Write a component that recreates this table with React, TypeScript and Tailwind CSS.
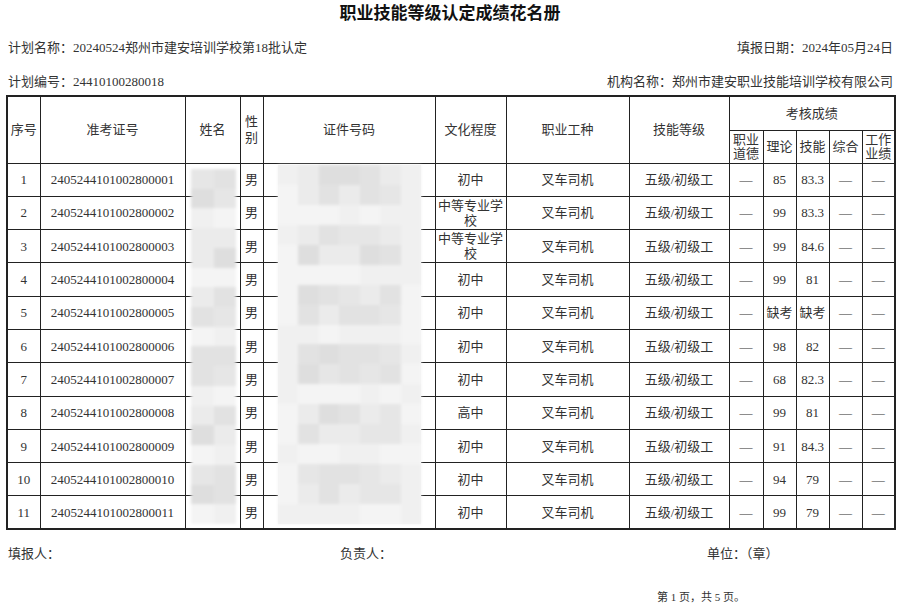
const rows: [number, string, string, string][] = [
  [1, '初中', '85', '83.3'],
  [2, '中等专业学校', '99', '83.3'],
  [3, '中等专业学校', '99', '84.6'],
  [4, '初中', '99', '81'],
  [5, '初中', '缺考', '缺考'],
  [6, '初中', '98', '82'],
  [7, '初中', '68', '82.3'],
  [8, '高中', '99', '81'],
  [9, '初中', '91', '84.3'],
  [10, '初中', '94', '79'],
  [11, '初中', '99', '79'],
];

const shades = [
  'bg-[#dedede]',
  'bg-[#e2e2e2]',
  'bg-[#e6e6e6]',
  'bg-[#ebebeb]',
  'bg-[#f0f0f0]',
  'bg-[#f4f4f4]',
];

// 打码块：伪随机灰度，避免每次渲染不同
function shade(seed: number, min: number, max: number) {
  const v = Math.abs(Math.sin(seed * 12.9898) * 43758.5453) % 1;
  return shades[min + Math.floor(v * (max - min + 1))];
}

function Mosaic({ cols, rowsCount, seed, edge }: { cols: number; rowsCount: number; seed: number; edge?: boolean }) {
  return (
    <div className="flex h-full w-full flex-col blur-[1.5px]">
      {Array.from({ length: rowsCount }).map((_, r) => (
        <div key={r} className="flex flex-1">
          {Array.from({ length: cols }).map((__, c) => {
            const isEdge = edge && (c === 0 || c === cols - 1);
            const band = r % 3 === 2;
            const cls = isEdge || band ? shade(seed + r * 31 + c, 4, 5) : shade(seed + r * 31 + c, 0, 3);
            return <div key={c} className={`flex-1 ${cls}`} />;
          })}
        </div>
      ))}
    </div>
  );
}

const th = 'border border-[#222] font-normal text-center align-middle p-0';
const td = 'border border-[#222] text-center align-middle p-0';

export default function App() {
  return (
    <div className="h-[603px] w-[900px] overflow-hidden bg-white font-['Liberation_Serif','Noto_Sans_CJK_SC',serif] text-[13px] text-[#333]">
      <h1 className="pt-[3px] text-center font-['Noto_Sans_CJK_SC',sans-serif] text-[17px] font-bold leading-[18px] text-[#111]">
        职业技能等级认定成绩花名册
      </h1>

      <div className="mt-[19px] flex justify-between pl-[8px] pr-[7px] leading-[15px]">
        <span>计划名称：20240524郑州市建安培训学校第18批认定</span>
        <span>填报日期：2024年05月24日</span>
      </div>
      <div className="mt-[19px] flex justify-between pl-[8px] pr-[7px] leading-[15px]">
        <span>计划编号：24410100280018</span>
        <span>机构名称：郑州市建安职业技能培训学校有限公司</span>
      </div>

      <div className="relative ml-[6px] mt-[6px] w-[888px]">
        <table className="w-[888px] table-fixed border-collapse border-2 border-[#222] leading-[15px]">
          <colgroup>
            <col className="w-[33px]" />
            <col className="w-[145px]" />
            <col className="w-[55px]" />
            <col className="w-[23px]" />
            <col className="w-[172px]" />
            <col className="w-[71px]" />
            <col className="w-[123px]" />
            <col className="w-[100px]" />
            <col className="w-[34px]" />
            <col className="w-[33px]" />
            <col className="w-[33px]" />
            <col className="w-[33px]" />
            <col className="w-[33px]" />
          </colgroup>
          <thead>
            <tr className="h-[34px]">
              <th rowSpan={2} className={th}>序号</th>
              <th rowSpan={2} className={th}>准考证号</th>
              <th rowSpan={2} className={th}>姓名</th>
              <th rowSpan={2} className={`${th} leading-[16px]`}>性<br />别</th>
              <th rowSpan={2} className={th}>证件号码</th>
              <th rowSpan={2} className={th}>文化程度</th>
              <th rowSpan={2} className={th}>职业工种</th>
              <th rowSpan={2} className={th}>技能等级</th>
              <th colSpan={5} className={th}>考核成绩</th>
            </tr>
            <tr className="h-[33px]">
              <th className={`${th} leading-[14px]`}>职业<br />道德</th>
              <th className={th}>理论</th>
              <th className={th}>技能</th>
              <th className={th}>综合</th>
              <th className={`${th} leading-[14px]`}>工作<br />业绩</th>
            </tr>
          </thead>
          <tbody>
            {rows.map(([n, edu, theory, skill]) => (
              <tr key={n} className="h-[33.3px]">
                <td className={td}>{n}</td>
                <td className={td}>{`24052441010028000${String(n).padStart(2, '0')}`}</td>
                <td className={td}></td>
                <td className={td}>男</td>
                <td className={td}></td>
                <td className={`${td} break-all`}>{edu}</td>
                <td className={td}>叉车司机</td>
                <td className={td}>五级/初级工</td>
                <td className={td}>—</td>
                <td className={td}>{theory}</td>
                <td className={td}>{skill}</td>
                <td className={td}>—</td>
                <td className={td}>—</td>
              </tr>
            ))}
          </tbody>
        </table>

        {/* 姓名、证件号码打码 */}
        <div className="absolute left-[185px] top-[74px] h-[355px] w-[45px]">
          <Mosaic cols={2} rowsCount={18} seed={3} />
        </div>
        <div className="absolute left-[272px] top-[70px] h-[359px] w-[143px] bg-[#f4f4f4]">
          <Mosaic cols={7} rowsCount={18} seed={11} edge />
        </div>
      </div>

      <div className="mt-[16px] flex pl-[8px] leading-[15px]">
        <span className="w-[332px]">填报人：</span>
        <span className="w-[367px]">负责人：</span>
        <span>单位：（章）</span>
      </div>

      <div className="mt-[30px] pl-[657px] text-[11px] leading-[13px]">第 1 页，共 5 页。</div>
    </div>
  );
}
